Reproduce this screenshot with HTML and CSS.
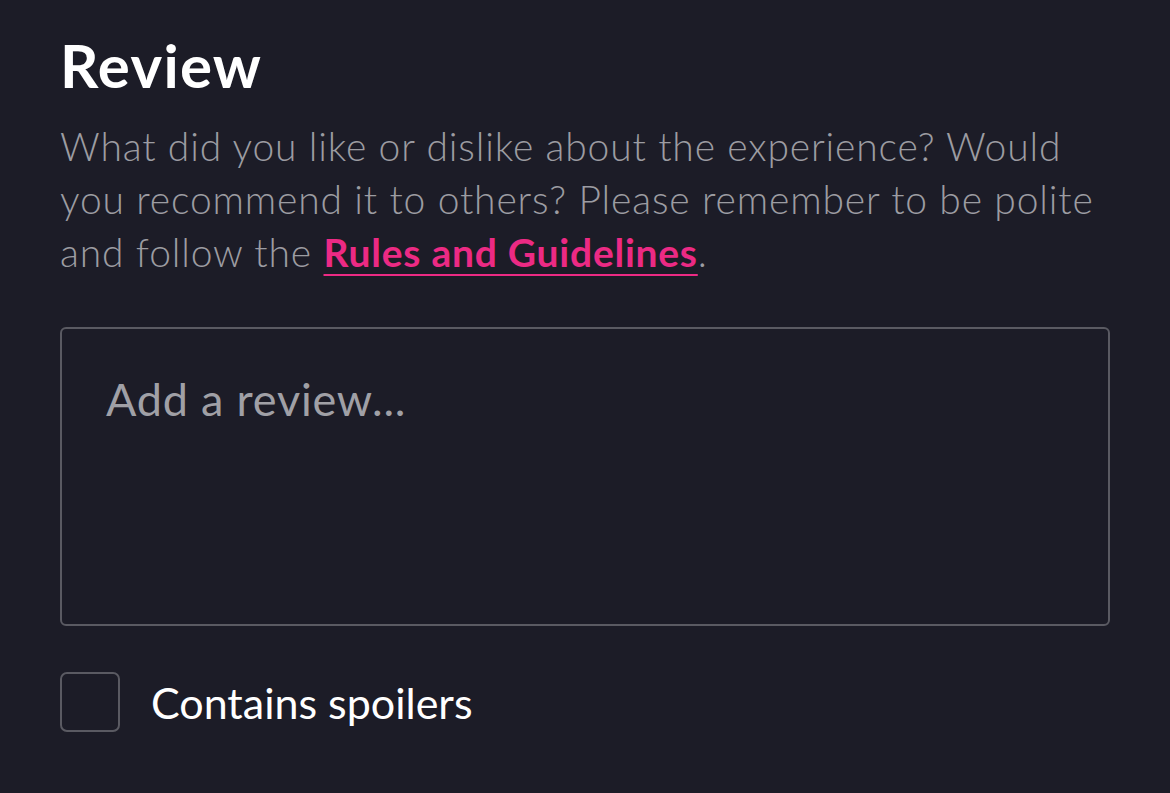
FILE: index.html
```html
<!DOCTYPE html>
<html lang="en">
<head>
    <meta charset="UTF-8">
    <meta name="viewport" content="width=device-width, initial-scale=1.0">
    <title>Review</title>
    <link rel="stylesheet" href="styles.css">
</head>
<body>
    <div class="review-section">
        <h1>Review</h1>
        <p class="hint">
            What did you like or dislike about the experience? Would
            you recommend it to others? Please remember to be polite
            and follow the <a href="#" class="rules-link">Rules and Guidelines</a>.
        </p>

        <textarea class="review-box" placeholder="Add a review..."></textarea>

        <label class="spoiler-row">
            <input type="checkbox" class="spoiler-check">
            <span>Contains spoilers</span>
        </label>
    </div>
</body>
</html>
```

FILE: styles.css
```css
body {
    font-family: Lato, "Noto Sans", sans-serif;
    margin: 0;
    padding: 0;
    background-color: #1c1c27;
    color: #fff;
}

.review-section {
    padding: 29px 60px 0 60px;
    display: flex;
    flex-direction: column;
}

h1 {
    margin: 0;
    font-size: 60px;
    font-weight: 700;
    letter-spacing: 1.3px;
    line-height: 72px;
    color: #fff;
}

.hint {
    margin: 19px 0 0 0;
    font-size: 39px;
    font-weight: 300;
    letter-spacing: 0.85px;
    line-height: 53px;
    color: #9c9ca2;
}

.rules-link {
    color: #ec2a84;
    font-weight: 700;
    letter-spacing: 0.75px;
    text-decoration: underline;
    text-underline-offset: 7px;
    text-decoration-thickness: 2px;
}

.review-box {
    margin-top: 48px;
    height: 299px;
    box-sizing: border-box;
    padding: 43px 44px;
    background-color: transparent;
    border: 2px solid #5a5a62;
    border-radius: 6px;
    font-family: Lato, "Noto Sans", sans-serif;
    font-size: 45px;
    letter-spacing: 0.8px;
    color: #fff;
    resize: none;
    outline: none;
}

.review-box::placeholder {
    color: #a0a0a6;
}

.spoiler-row {
    margin-top: 46px;
    display: flex;
    align-items: center;
    gap: 31px;
    font-size: 43px;
    color: #fff;
}

.spoiler-check {
    appearance: none;
    margin: 0;
    width: 60px;
    height: 60px;
    box-sizing: border-box;
    border: 2px solid #5a5a62;
    border-radius: 7px;
    background: transparent;
}
```
